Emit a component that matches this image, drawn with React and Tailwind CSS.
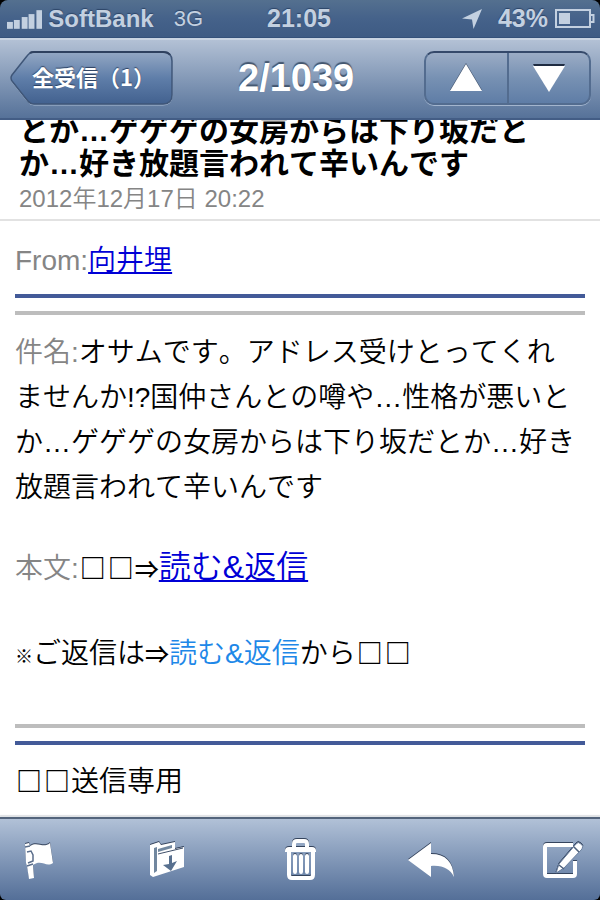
import React from 'react';

function Boxes() {
  return (
    <span className="font-['Noto_Sans_CJK_JP',sans-serif] text-[26px] leading-none font-bold">
      <span className="inline-block w-7 text-center">□</span>
      <span className="inline-block w-7 text-center">□</span>
    </span>
  );
}

function Arrow() {
  return <span className="font-['Noto_Sans_CJK_JP',sans-serif] text-[24px] leading-none font-medium">⇒</span>;
}

function StatusBar() {
  return (
    <div className="grid h-[38px] grid-cols-3 items-center rounded-t-lg border-b border-[#34517a] bg-linear-to-b from-[#54708f] via-[#45628a] to-[#3e5b84] pr-[5px] pl-[7px] text-[24px] leading-none text-[#c3d0e0] [text-shadow:0_-1px_1px_#2d4568]">
      <div className="flex items-center gap-[6px] whitespace-nowrap">
        <svg width="36" height="20" viewBox="0 0 36 20" fill="currentColor" aria-hidden="true">
          <rect x="0" y="13" width="6" height="7" />
          <rect x="7" y="11" width="6" height="9" />
          <rect x="15" y="8" width="6" height="12" />
          <rect x="22" y="5" width="6" height="15" />
          <rect x="30" y="1" width="6" height="19" />
        </svg>
        <span className="font-bold">SoftBank</span>
        <span className="ml-[14px] text-[22px]">3G</span>
      </div>
      <div className="pr-1 text-center text-[25px] font-bold">21:05</div>
      <div className="flex items-center justify-end gap-[7px]">
        <svg width="22" height="22" viewBox="0 0 22 22" fill="currentColor" className="mr-2" aria-hidden="true">
          <path d="M21 1L1 10.500L11 11.500L12.500 21Z" />
        </svg>
        <span className="text-[25px] font-bold">43%</span>
        <svg width="40" height="20" viewBox="0 0 40 20" aria-hidden="true">
          <rect x="1" y="1" width="34" height="17" fill="none" stroke="currentColor" strokeWidth="2" />
          <rect x="4" y="4" width="11" height="11" fill="currentColor" />
          <path d="M35 6H38.500V13H35" fill="none" stroke="currentColor" strokeWidth="2" />
        </svg>
      </div>
    </div>
  );
}

function NavBar() {
  return (
    <header className="flex h-[82px] items-center justify-between border-t-2 border-b-2 border-t-[#c9d4e3] border-b-[#435d85] bg-linear-to-b from-[#b3c1d5] to-[#567299] pr-[9px] pb-[2px] pl-[10px] text-white">
      <button type="button" className="relative h-[55px] w-[163px] pr-3 pb-1 pl-[22px] text-left">
        <svg className="absolute inset-0" width="163" height="55" viewBox="0 0 163 55" aria-hidden="true">
          <defs>
            <linearGradient id="back" x1="0" y1="0" x2="0" y2="1">
              <stop offset="0" stopColor="#94a8c4" />
              <stop offset="0.500" stopColor="#5f7ea9" />
              <stop offset="1" stopColor="#42618f" />
            </linearGradient>
          </defs>
          <path d="M24 2H153Q162 2 162 11V45Q162 54 153 54H24Q20 54 17 50L2 31Q0 28 2 25L17 6Q20 2 24 2Z" fill="none" stroke="#a9bbd3" strokeWidth="1" />
          <path d="M24 1H153Q162 1 162 10V44Q162 53 153 53H24Q20 53 17 49L2 30Q0 27 2 24L17 5Q20 1 24 1Z" fill="url(#back)" stroke="#3f5678" strokeWidth="1.500" />
          <path d="M20 2Q21 1 24 1H153Q158 1 160 4" fill="none" stroke="#2f415f" strokeWidth="2" />
        </svg>
        <span className="relative font-['Noto_Sans_CJK_JP',sans-serif] text-[22px] leading-[48px] font-bold whitespace-nowrap [text-shadow:0_-1px_1px_#2d4060]">全受信（1）</span>
      </button>
      <h1 className="ml-[65px] flex-1 text-[38px] leading-none font-bold [text-shadow:0_-2px_1px_#43566f]">2/1039</h1>
      <div className="flex h-[54px] w-[167px] rounded-[10px] border-2 border-[#536c8f] border-t-[#35496a] bg-linear-to-b from-[#9bacc5] via-[#7791b3] to-[#5f7da6] shadow-[0_1px_0_#a3b5ce]">
        <button type="button" aria-label="Previous message" className="flex flex-1 items-center justify-center border-r-2 border-[#536c8f]">
          <svg width="34" height="30" viewBox="0 0 34 30" aria-hidden="true">
            <path d="M17 0L33 27H1Z" fill="#3a4b66" />
            <path d="M17 1L33 28H1Z" fill="#fff" />
          </svg>
        </button>
        <button type="button" aria-label="Next message" className="flex flex-1 items-center justify-center">
          <svg width="34" height="30" viewBox="0 0 34 30" aria-hidden="true">
            <path d="M1 1H33L17 28Z" fill="#1f2c42" />
            <path d="M1 3H33L17 29Z" fill="#fff" />
          </svg>
        </button>
      </div>
    </header>
  );
}

function ToolButton({ label, children }) {
  return (
    <button type="button" aria-label={label} className="flex w-12 justify-center">
      <svg width="48" height="44" viewBox="0 0 48 44" className="drop-shadow-[0_-1px_0_#35445d]" fill="#fff" aria-hidden="true">
        {children}
      </svg>
    </button>
  );
}

function Toolbar() {
  return (
    <footer className="flex h-[83px] shrink-0 items-center justify-between rounded-b-md border-t-2 border-[#53647c] bg-linear-to-b from-[#b1c1d7] to-[#546f98] px-[14px] shadow-[0_-2px_1px_#dfe2e5]">
      <ToolButton label="Flag">
        <path d="M11 6L15 5L16 8C24 3 29 11 36 5L39 25C32 30 28 21 19 27L20 40L15 41L13 28L12 25Z" />
        <path d="M11 9L16 8M13 14L17 13L19 17V23L14 25M13 28L19 26" fill="none" stroke="#5b6e8b" strokeWidth="1.500" />
      </ToolButton>
      <ToolButton label="Move">
        <path d="M5 7L14 4L16 7L30 4V11L39 9V29L8 39L5 37Z" />
        <path d="M9 10L12 9V33L9 35Z" fill="#71879f" />
        <path d="M13 11L27 7V10L13 14Z" fill="#71879f" />
        <path d="M13 16L38 10" stroke="#3f4f69" strokeWidth="1" />
        <path d="M24 18L27 17V25L32 23L26 33L18 27L24 26Z" fill="#58708f" />
      </ToolButton>
      <ToolButton label="Trash">
        <path d="M18 9V6Q18 3 21 3H28Q31 3 31 6V9" fill="none" stroke="#fff" strokeWidth="4" />
        <path d="M9 13Q9 9 13 9H36Q40 9 40 13V14H9Z" />
        <path d="M13 12V37Q13 40 16 40H34Q37 40 37 37V12" fill="none" stroke="#fff" strokeWidth="4" />
        <path d="M19 18V34M25 18V34M31 18V34" stroke="#fff" strokeWidth="4" strokeLinecap="round" />
      </ToolButton>
      <ToolButton label="Reply">
        <path d="M1 22L24 5V16C39 16 46 24 47 39C43 31 36 27 24 28V39Z" />
      </ToolButton>
      <ToolButton label="Compose">
        <path d="M35 7H9Q7 7 7 9V36Q7 38 9 38H35Q37 38 37 36V23" fill="none" stroke="#fff" strokeWidth="4" />
        <path d="M18 35L21 26L38 6Q40 3 43 6Q46 8 44 11L26 30Z" stroke="#6b809f" strokeWidth="1" />
        <path d="M36 9L41 14M21 27L26 31" stroke="#4e617c" strokeWidth="1.500" />
      </ToolButton>
    </footer>
  );
}

function Rules({ flip }) {
  return (
    <div className={flip ? 'flex flex-col-reverse gap-[13px]' : 'flex flex-col gap-[13px]'}>
      <hr className="border-t-4 border-[#435a98]" />
      <hr className="border-t-4 border-[#bdbdbd]" />
    </div>
  );
}

export default function App() {
  return (
    <div className="flex min-h-screen flex-col bg-black font-['Liberation_Sans','Noto_Sans_CJK_JP',sans-serif]">
      <StatusBar />
      <NavBar />
      <main className="flex-1 bg-white text-[28px] leading-[45px] font-[350] text-black [font-kerning:none]">
        <div className="border-b-2 border-[#e2e2e2] pr-12 pb-px pl-[19px]">
          <div className="flex h-[60px] flex-col justify-end overflow-hidden">
            <h2 className="text-[30px] leading-[33px] font-bold">とか…ゲゲゲの女房からは下り坂だとか…好き放題言われて辛いんです</h2>
          </div>
          <p className="text-[24px] leading-[38px] text-[#858585]">2012年12月17日 20:22</p>
        </div>
        <div className="px-[15px] pt-[17px]">
          <p>
            <span className="text-[#858585]">From:</span>
            <a href="#sender" className="text-[#0000d6] underline decoration-2 underline-offset-2">向井埋</a>
          </p>
          <div className="pt-[11px] pb-[15px]"><Rules /></div>
          <p className="pr-2">
            <span className="text-[#858585]">件名:</span>オサムです。アドレス受けとってくれませんか!?国仲さんとの噂や…性格が悪いとか…ゲゲゲの女房からは下り坂だとか…好き放題言われて辛いんです
          </p>
          <p className="mt-9">
            <span className="text-[#858585]">本文:</span>
            <Boxes /><Arrow />
            <a href="#reply" className="text-[32px] leading-none text-[#0000d6] underline decoration-2 underline-offset-2">読む&amp;返信</a>
          </p>
          <p className="mt-10">
            <span className="font-['Noto_Sans_CJK_JP',sans-serif] text-[18px] leading-none font-bold">※</span>ご返信は<Arrow />
            <span className="text-[#1e88e8]">読む&amp;返信</span>から<Boxes />
          </p>
          <div className="pt-12 pb-[14px]"><Rules flip /></div>
          <p className="pb-3"><Boxes />送信専用</p>
        </div>
      </main>
      <Toolbar />
    </div>
  );
}
